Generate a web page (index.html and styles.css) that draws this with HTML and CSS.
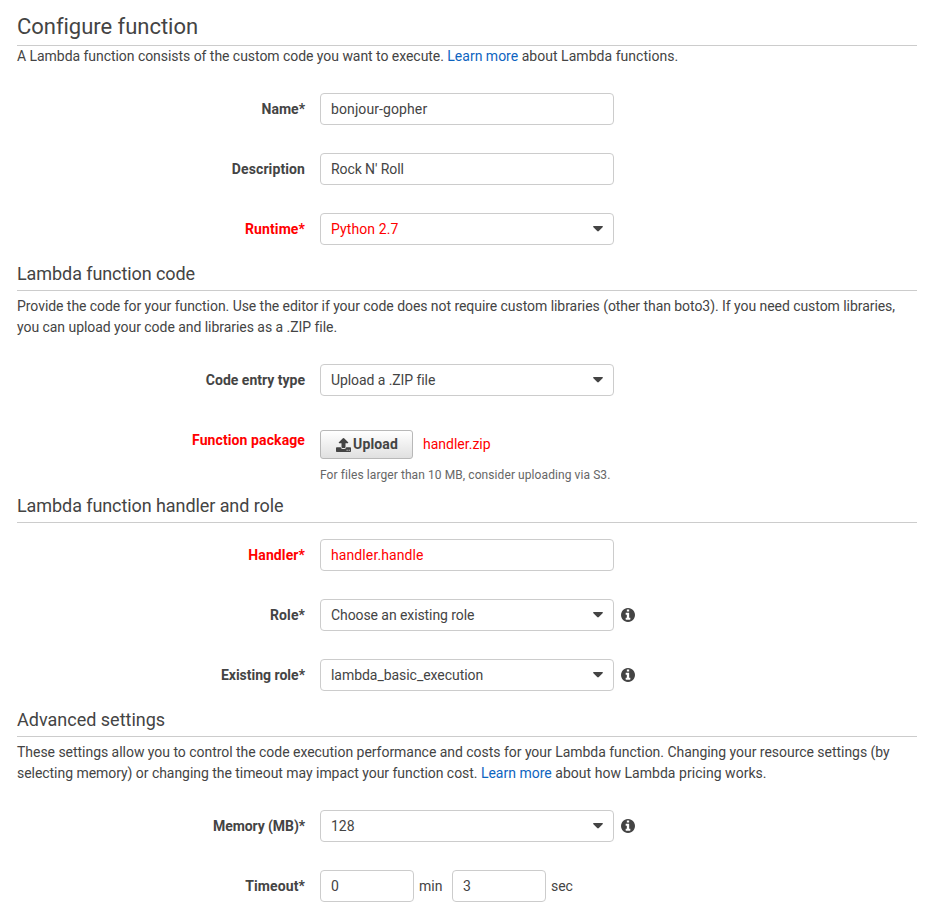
FILE: index.html
```html
<!DOCTYPE html>
<html lang="en">
<head>
<meta charset="utf-8">
<title>Configure function</title>
<link rel="stylesheet" href="styles.css">
</head>
<body>
<svg class="defs" width="0" height="0" aria-hidden="true">
  <symbol id="caret" viewBox="0 0 10 6"><path d="M.7 0h8.600q.9 0 .5.9L5.800 5q-.8.8-1.600 0L.2.900Q-.2 0 .7 0z"/></symbol>
  <symbol id="info" viewBox="0 0 1536 1536"><path fill-rule="evenodd" d="M1024 1248v-160q0-14-9-23t-23-9h-96V544q0-14-9-23t-23-9H544q-14 0-23 9t-9 23v160q0 14 9 23t23 9h96v320h-96q-14 0-23 9t-9 23v160q0 14 9 23t23 9h448q14 0 23-9t9-23zM896 352V192q0-14-9-23t-23-9H672q-14 0-23 9t-9 23v160q0 14 9 23t23 9h192q14 0 23-9t9-23zM1536 768q0 209-103 385.500T1153.500 1433 768 1536 382.500 1433 103 1153.500 0 768 103 382.500 382.500 103 768 0t385.500 103T1433 382.500 1536 768z"/></symbol>
</svg>
<main class="page">
  <h1>Configure function</h1>
  <p class="intro"><span class="lead">A Lambda function consists of the custom code you want to execute. </span><a>Learn more</a><span class="tail"> about Lambda functions.</span></p>
  <div class="row first"><label>Name*</label><div class="field wide">bonjour-gopher</div></div>
  <div class="row"><label class="wide">Description</label><div class="field narrow">Rock N' Roll</div></div>
  <div class="row changed"><label class="wide">Runtime*</label><div class="field wide">Python 2.7<svg class="caret"><use href="#caret"/></svg></div></div>

  <h2 class="narrow">Lambda function code</h2>
  <p><span class="code-text">Provide the code for your function. Use the editor if your code does not require custom libraries (other than boto3). If you need custom libraries,</span><br><span class="lead">you can upload your code and libraries as a .ZIP file.</span></p>
  <div class="row after-text"><label>Code entry type</label><div class="field narrow">Upload a .ZIP file<svg class="caret"><use href="#caret"/></svg></div></div>
  <div class="row package changed"><label class="wide">Function package</label>
    <div>
      <div class="upload-line"><button type="button"><svg class="upload" viewBox="0 0 15 14"><path fill-rule="evenodd" d="M7.500 0q.3 0 .6.300l4 4q.6.700-.3.900H9.500v4q0 .7-.7.700H6.200q-.7 0-.7-.7v-4H3.200q-.9-.2-.3-.9l4-4q.3-.3.600-.3zM.8 9.300h3.900q.4 1.700 1.800 1.700h2q1.400 0 1.800-1.700h3.900q.8 0 .8.800v3.100q0 .8-.8.8H.8q-.8 0-.8-.8v-3.100q0-.8.8-.8zm9.800 2.500v1h1v-1zm2.100 0v1h1v-1z"/></svg>Upload</button><span>handler.zip</span></div>
      <div class="hint">For files larger than 10 MB, consider uploading via S3.</div>
    </div>
  </div>

  <h2 class="handler-title narrow">Lambda function handler and role</h2>
  <div class="row handler changed"><label class="wide">Handler*</label><div class="field wide">handler.handle</div></div>
  <div class="row"><label class="wide">Role*</label><div class="field narrow">Choose an existing role<svg class="caret"><use href="#caret"/></svg></div><svg class="info"><use href="#info"/></svg></div>
  <div class="row"><label>Existing role*</label><div class="field lead">lambda_basic_execution<svg class="caret"><use href="#caret"/></svg></div><svg class="info"><use href="#info"/></svg></div>

  <h2>Advanced settings</h2>
  <p><span class="advanced">These settings allow you to control the code execution performance and costs for your Lambda function. Changing your resource settings (by</span><br><span class="lead">selecting memory) or changing the timeout may impact your function cost. </span><a>Learn more</a><span class="tail"> about how Lambda pricing works.</span></p>
  <div class="row after-text"><label class="narrow">Memory (MB)*</label><div class="field">128<svg class="caret"><use href="#caret"/></svg></div><svg class="info"><use href="#info"/></svg></div>
  <div class="row"><label class="wide">Timeout*</label><div class="field short">0</div><span class="unit min">min</span><div class="field short">3</div><span class="unit narrow">sec</span></div>
</main>
</body>
</html>
```
FILE: styles.css
```css
* { box-sizing: border-box; }
body { margin: 0; background: #fff; color: #444; font: 14px/21px Roboto, sans-serif; overflow: hidden; }
.defs { display: block; height: 0; }
.page { width: 900px; margin-left: 17px; padding-top: 9px; }
h1, h2, p { margin: 0; font-weight: 400; }
h1 { height: 37px; font-size: 22px; line-height: 35px; letter-spacing: -.03px; border-bottom: 1px solid #ccc; }
h2 { height: 30px; margin-top: 16px; font-size: 18px; line-height: 25px; border-bottom: 1px solid #ccc; }
p { padding-top: 5px; white-space: nowrap; }
.intro { padding-top: 0; }
a { color: #0e64c0; }
.lead { letter-spacing: -.045px; }
.tail { letter-spacing: .035px; }
.advanced { letter-spacing: -.033px; }
.code-text { letter-spacing: -.055px; }
.wide { letter-spacing: .1px; }
.narrow { letter-spacing: -.08px; }
.row { display: flex; align-items: center; margin-top: 28px; min-height: 32px; }
.first { margin-top: 26px; }
.after-text { margin-top: 26px; }
label { width: 288px; margin-right: 15px; text-align: right; font-weight: 700; }
.field { display: flex; align-items: center; justify-content: space-between; width: 294px; height: 32px; padding: 0 10px; border: 1px solid #ccc; border-radius: 4px; }
.changed, .changed label { color: #f00; }
.caret { width: 10px; height: 6px; fill: #444; }
.info { width: 14px; height: 14px; margin-left: 7px; fill: #444; }
.package { align-items: flex-start; margin-top: 34px; }
.upload-line { display: flex; align-items: center; gap: 10px; }
button { display: flex; align-items: center; width: 93px; height: 29px; padding: 0 0 0 16px; border: 1px solid #b8b8b8; border-radius: 3px; background: linear-gradient(#fff, #e0e0e0); color: #444; font: 700 14px/21px Roboto, sans-serif; letter-spacing: .15px; }
.upload { flex: none; width: 15px; height: 14px; margin: 0 2px 0 -1px; fill: #444; }
.hint { margin-top: 6px; color: #666; font-size: 12px; line-height: 20px; letter-spacing: .083px; white-space: nowrap; }
.handler-title { margin-top: 8px; }
.handler { margin-top: 16px; }
.short { width: 94px; }
.unit { margin-left: 5px; }
.min { width: 33px; }
```
